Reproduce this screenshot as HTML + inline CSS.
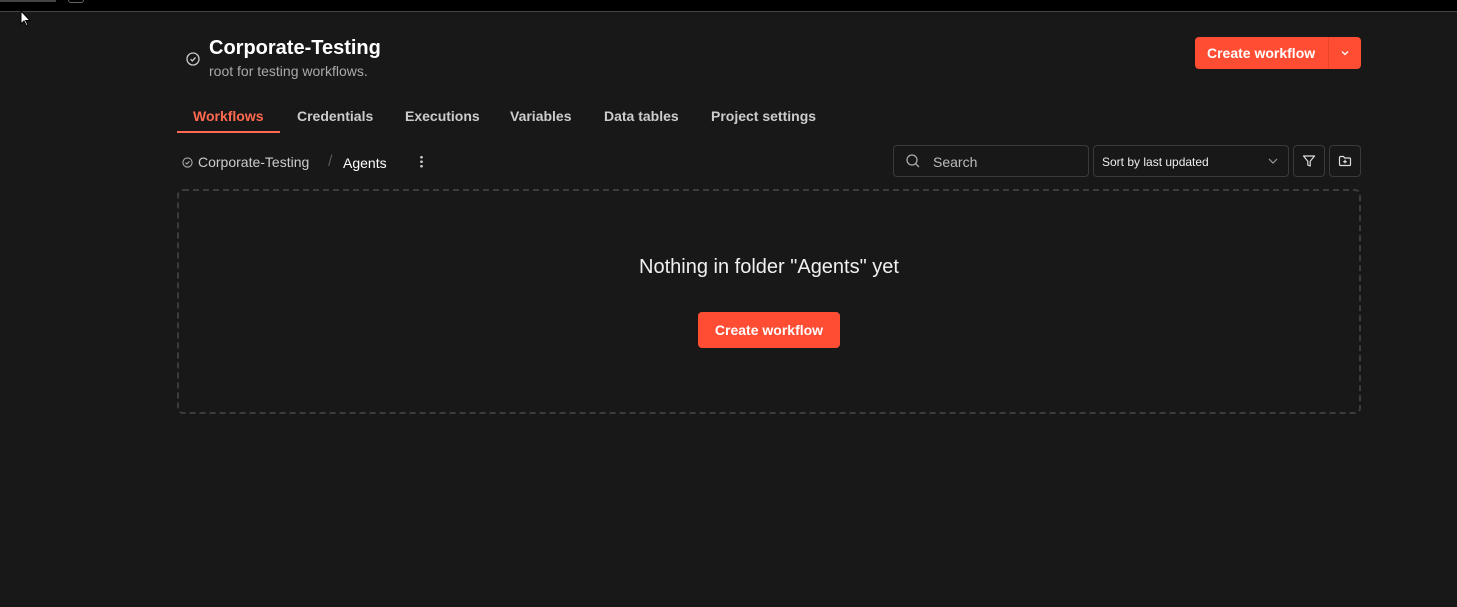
<!DOCTYPE html>
<html><head><meta charset="utf-8"><style>
*{box-sizing:border-box;margin:0;padding:0}
body{width:1457px;height:607px;background:#181818;font-family:"Liberation Sans",sans-serif;color:#e6e6e6;position:relative;overflow:hidden}
.top{position:absolute;left:0;top:0;width:1457px;height:12px;background:#000;border-bottom:1px solid #444}
.tab1{position:absolute;left:0;top:0;width:56px;height:2px;background:#444}
.tab2{position:absolute;left:68px;top:0;width:16px;height:3px;border:1px solid #666;border-top:none;border-radius:0 0 3px 3px}
.abs{position:absolute}
h1{position:absolute;left:209px;top:37px;font-size:20px;font-weight:bold;color:#fff}
.sub{left:209px;top:63px;font-size:14px;color:#aaa}
.btn{background:#ff4d33;color:#fff;font-weight:bold;font-size:14px;border-radius:4px;display:flex;align-items:center;justify-content:center}
.tabs span{position:absolute;top:108px;font-size:14px;font-weight:bold;color:#ccc}
.box{border:1px solid #3a3a3a;border-radius:4px}
</style></head><body>
<div class="top"><div class="tab1"></div><div class="tab2"></div></div>
<svg class="abs" style="left:20px;top:10px" width="12" height="18" viewBox="0 0 12 18"><path d="M1 1 L1 14 L4 11 L6.5 16 L8 15.3 L5.7 10.5 L10 10.5 Z" fill="#fff" stroke="#000" stroke-width="1"/></svg>
<svg class="abs" style="left:186px;top:52px" width="14" height="14" viewBox="0 0 14 14"><circle cx="7" cy="7" r="6" fill="none" stroke="#ccc" stroke-width="1.3"/><path d="M4.5 7.2l1.8 1.7 3.2-3.4" fill="none" stroke="#ccc" stroke-width="1.3"/></svg>
<h1>Corporate-Testing</h1>
<div class="abs sub">root for testing workflows.</div>
<div class="abs btn" style="left:1195px;top:37px;width:166px;height:32px;justify-content:flex-start;padding-left:12px">Create workflow</div>
<div class="abs" style="left:1328px;top:37px;width:1px;height:32px;background:#e8442c"></div>
<svg class="abs" style="left:1340px;top:49px" width="10" height="8" viewBox="0 0 10 8"><path d="M2 2.5l3 3 3-3" fill="none" stroke="#fff" stroke-width="1.3"/></svg>
<div class="tabs">
<span style="left:193px;color:#ff6a50">Workflows</span>
<span style="left:297px">Credentials</span>
<span style="left:405px">Executions</span>
<span style="left:510px">Variables</span>
<span style="left:604px">Data tables</span>
<span style="left:711px">Project settings</span>
</div>
<div class="abs" style="left:177px;top:131px;width:103px;height:2px;background:#ff6a50"></div>
<svg class="abs" style="left:182px;top:157px" width="11" height="11" viewBox="0 0 12 12"><circle cx="6" cy="6" r="5" fill="none" stroke="#aaa" stroke-width="1.2"/><path d="M3.8 6.2l1.5 1.4 2.8-2.9" fill="none" stroke="#aaa" stroke-width="1.2"/></svg>
<div class="abs" style="left:198px;top:154px;font-size:14px;color:#ccc">Corporate-Testing</div>
<div class="abs" style="left:328px;top:153px;font-size:16px;color:#555">/</div>
<div class="abs" style="left:343px;top:155px;font-size:14px;color:#fff">Agents</div>
<div class="abs" style="left:420px;top:155px;width:3px;height:13px;background:radial-gradient(circle,#ccc 1.2px,transparent 1.5px) 0 0/3px 4.5px"></div>
<div class="abs box" style="left:893px;top:145px;width:196px;height:32px"></div>
<svg class="abs" style="left:905px;top:153px" width="16" height="16" viewBox="0 0 16 16"><circle cx="7" cy="7" r="5" fill="none" stroke="#aaa" stroke-width="1.3"/><path d="M10.6 10.6l3.4 3.4" stroke="#aaa" stroke-width="1.3"/></svg>
<div class="abs" style="left:933px;top:154px;font-size:14px;color:#bbb">Search</div>
<div class="abs box" style="left:1093px;top:145px;width:196px;height:32px"></div>
<div class="abs" style="left:1102px;top:155px;font-size:12px;color:#eee">Sort by last updated</div>
<svg class="abs" style="left:1267px;top:156px" width="12" height="10" viewBox="0 0 12 10"><path d="M2 3l4 4 4-4" fill="none" stroke="#999" stroke-width="1.2"/></svg>
<div class="abs box" style="left:1293px;top:145px;width:32px;height:32px"></div>
<svg class="abs" style="left:1302px;top:154px" width="14" height="14" viewBox="0 0 14 14"><path d="M1.5 2h11L8.2 7.2V12L5.8 11V7.2Z" fill="none" stroke="#ddd" stroke-width="1.2" stroke-linejoin="round"/></svg>
<div class="abs box" style="left:1329px;top:145px;width:32px;height:32px"></div>
<svg class="abs" style="left:1338px;top:154px" width="14" height="14" viewBox="0 0 14 14"><path d="M1.5 3.5a1 1 0 0 1 1-1h3l1.2 1.5h4.8a1 1 0 0 1 1 1v5.5a1 1 0 0 1-1 1h-9a1 1 0 0 1-1-1z" fill="none" stroke="#ddd" stroke-width="1.2"/><path d="M7 5.8v3.6M5.2 7.6h3.6" stroke="#ddd" stroke-width="1.2"/></svg>
<div class="abs" style="left:177px;top:189px;width:1184px;height:225px;border:2px dashed #3c3c3c;border-radius:6px"></div>
<div class="abs" style="left:177px;top:256px;width:1184px;text-align:center;font-size:20px;color:#f0f0f0">Nothing in folder "Agents" yet</div>
<div class="abs btn" style="left:698px;top:312px;width:142px;height:36px">Create workflow</div>
</body></html>
